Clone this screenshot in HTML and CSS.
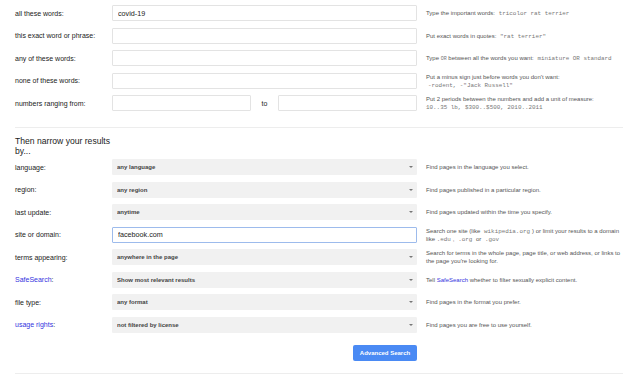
FILE: index.html
```html
<!DOCTYPE html>
<html lang="en">
<head>
  <meta charset="UTF-8">
  <meta name="viewport" content="width=device-width, initial-scale=1.0">
  <title>Advanced Search</title>
  <link rel="stylesheet" href="styles.css">
</head>
<body>
<div class="page">
  <form class="adv" onsubmit="return false">
    <div class="row">
      <label class="lbl" for="q_all">all these words:</label>
      <input class="txt" id="q_all" type="text" value="covid-19">
      <div class="hint">Type the important words: <span class="ex">tricolor rat terrier</span></div>
    </div>
    <div class="row">
      <label class="lbl" for="q_exact">this exact word or phrase:</label>
      <input class="txt" id="q_exact" type="text">
      <div class="hint">Put exact words in quotes: <span class="ex">"rat terrier"</span></div>
    </div>
    <div class="row">
      <label class="lbl" for="q_any">any of these words:</label>
      <input class="txt" id="q_any" type="text">
      <div class="hint">Type <span class="ex small">OR</span> between all the words you want: <span class="ex">miniature OR standard</span></div>
    </div>
    <div class="row">
      <label class="lbl" for="q_none">none of these words:</label>
      <input class="txt" id="q_none" type="text">
      <div class="hint">Put a minus sign just before words you don't want:<br><span class="ex">-rodent, -"Jack Russell"</span></div>
    </div>
    <div class="row">
      <label class="lbl" for="q_from">numbers ranging from:</label>
      <div class="range">
        <input class="txt" id="q_from" type="text">
        <span class="to">to</span>
        <input class="txt" type="text">
      </div>
      <div class="hint">Put 2 periods between the numbers and add a unit of measure:<br><span class="ex first">10..35 lb, $300..$500, 2010..2011</span></div>
    </div>

    <hr class="rule">
    <h3 class="narrow">Then narrow your results by...</h3>

    <div class="row">
      <label class="lbl">language:</label>
      <div class="pick"><select><option>any language</option></select></div>
      <div class="hint">Find pages in the language you select.</div>
    </div>
    <div class="row">
      <label class="lbl">region:</label>
      <div class="pick"><select><option>any region</option></select></div>
      <div class="hint">Find pages published in a particular region.</div>
    </div>
    <div class="row">
      <label class="lbl">last update:</label>
      <div class="pick"><select><option>anytime</option></select></div>
      <div class="hint">Find pages updated within the time you specify.</div>
    </div>
    <div class="row">
      <label class="lbl" for="q_site">site or domain:</label>
      <input class="txt focus" id="q_site" type="text" value="facebook.com">
      <div class="hint">Search one site (like <span class="ex">wikipedia.org</span>) or limit your results to a domain like <span class="ex first">.edu</span>, <span class="ex">.org</span> or <span class="ex">.gov</span></div>
    </div>
    <div class="row">
      <label class="lbl">terms appearing:</label>
      <div class="pick"><select><option>anywhere in the page</option></select></div>
      <div class="hint">Search for terms in the whole page, page title, or web address, or links to the page you're looking for.</div>
    </div>
    <div class="row">
      <label class="lbl"><a href="#">SafeSearch</a>:</label>
      <div class="pick"><select><option>Show most relevant results</option></select></div>
      <div class="hint">Tell <a href="#">SafeSearch</a> whether to filter sexually explicit content.</div>
    </div>
    <div class="row">
      <label class="lbl">file type:</label>
      <div class="pick"><select><option>any format</option></select></div>
      <div class="hint">Find pages in the format you prefer.</div>
    </div>
    <div class="row">
      <label class="lbl"><a href="#">usage rights</a>:</label>
      <div class="pick"><select><option>not filtered by license</option></select></div>
      <div class="hint">Find pages you are free to use yourself.</div>
    </div>

    <div class="actions">
      <button class="btn" type="submit">Advanced Search</button>
    </div>
    <hr class="rule bottom">
  </form>
</div>
</body>
</html>
```

FILE: styles.css
```css
body {
  margin: 0;
  background: #fff;
  color: #222;
  font-family: "Liberation Sans", Arial, sans-serif;
}
.page {
  padding: 2px 0 0 15px;
  width: 608px;
}
.row {
  display: grid;
  grid-template-columns: 97px 305px 1fr;
  align-items: center;
  height: 22.5px;
}
.lbl {
  font-size: 7px;
  color: #222;
}
a {
  color: #3434e0;
  text-decoration: none;
}
.txt {
  display: block;
  box-sizing: border-box;
  width: 100%;
  height: 16px;
  margin: 0;
  padding: 0 5px;
  border: 1px solid #e3e3e3;
  border-radius: 1px;
  background: #fff;
  color: #222;
  font-family: "Liberation Sans", Arial, sans-serif;
  font-size: 7.2px;
  outline: none;
}
.txt.focus {
  border-color: #9dbbec;
}
.range {
  display: flex;
  align-items: center;
}
.range .txt {
  width: 139px;
}
.range .to {
  width: 27px;
  text-align: center;
  font-size: 7px;
  color: #222;
}
.pick {
  position: relative;
}
.pick select {
  display: block;
  box-sizing: border-box;
  width: 100%;
  height: 16px;
  margin: 0;
  padding: 0 4px;
  -webkit-appearance: none;
  appearance: none;
  border: 1px solid #f1f1f1;
  border-radius: 1px;
  background: #f1f1f1;
  color: #444;
  font-family: "Liberation Sans", Arial, sans-serif;
  font-size: 6px;
  font-weight: bold;
  outline: none;
}
/* little dropdown arrow */
.pick::after {
  content: '';
  position: absolute;
  right: 4px;
  top: 7px;
  border-left: 2px solid transparent;
  border-right: 2px solid transparent;
  border-top: 2px solid #777;
}
.hint {
  padding-left: 9px;
  font-size: 6px;
  line-height: 8px;
  color: #555;
}
.ex {
  font-family: "Liberation Mono", "Courier New", monospace;
  font-size: 5.9px;
  line-height: 1;
  color: #777;
  margin: 0 2px;
}
.ex.first {
  margin-left: 0;
}
.ex.small {
  font-size: 5px;
  margin: 0;
}
.rule {
  width: 608px;
  height: 0;
  margin: 12.5px 0 0;
  border: 0;
  border-top: 1px solid #ededed;
}
.rule.bottom {
  margin-top: 12px;
}
.narrow {
  width: 100px;
  margin: 8px 0 0;
  font-size: 8.6px;
  font-weight: normal;
  line-height: 10px;
  color: #222;
}
.actions {
  display: flex;
  justify-content: flex-end;
  width: 402px;
  margin-top: 9px;
}
.btn {
  width: 64px;
  height: 16px;
  padding: 0;
  border: 0;
  border-radius: 2px;
  background: #4a8af4;
  color: #fff;
  font-family: "Liberation Sans", Arial, sans-serif;
  font-size: 6px;
  font-weight: bold;
  cursor: pointer;
}
```
